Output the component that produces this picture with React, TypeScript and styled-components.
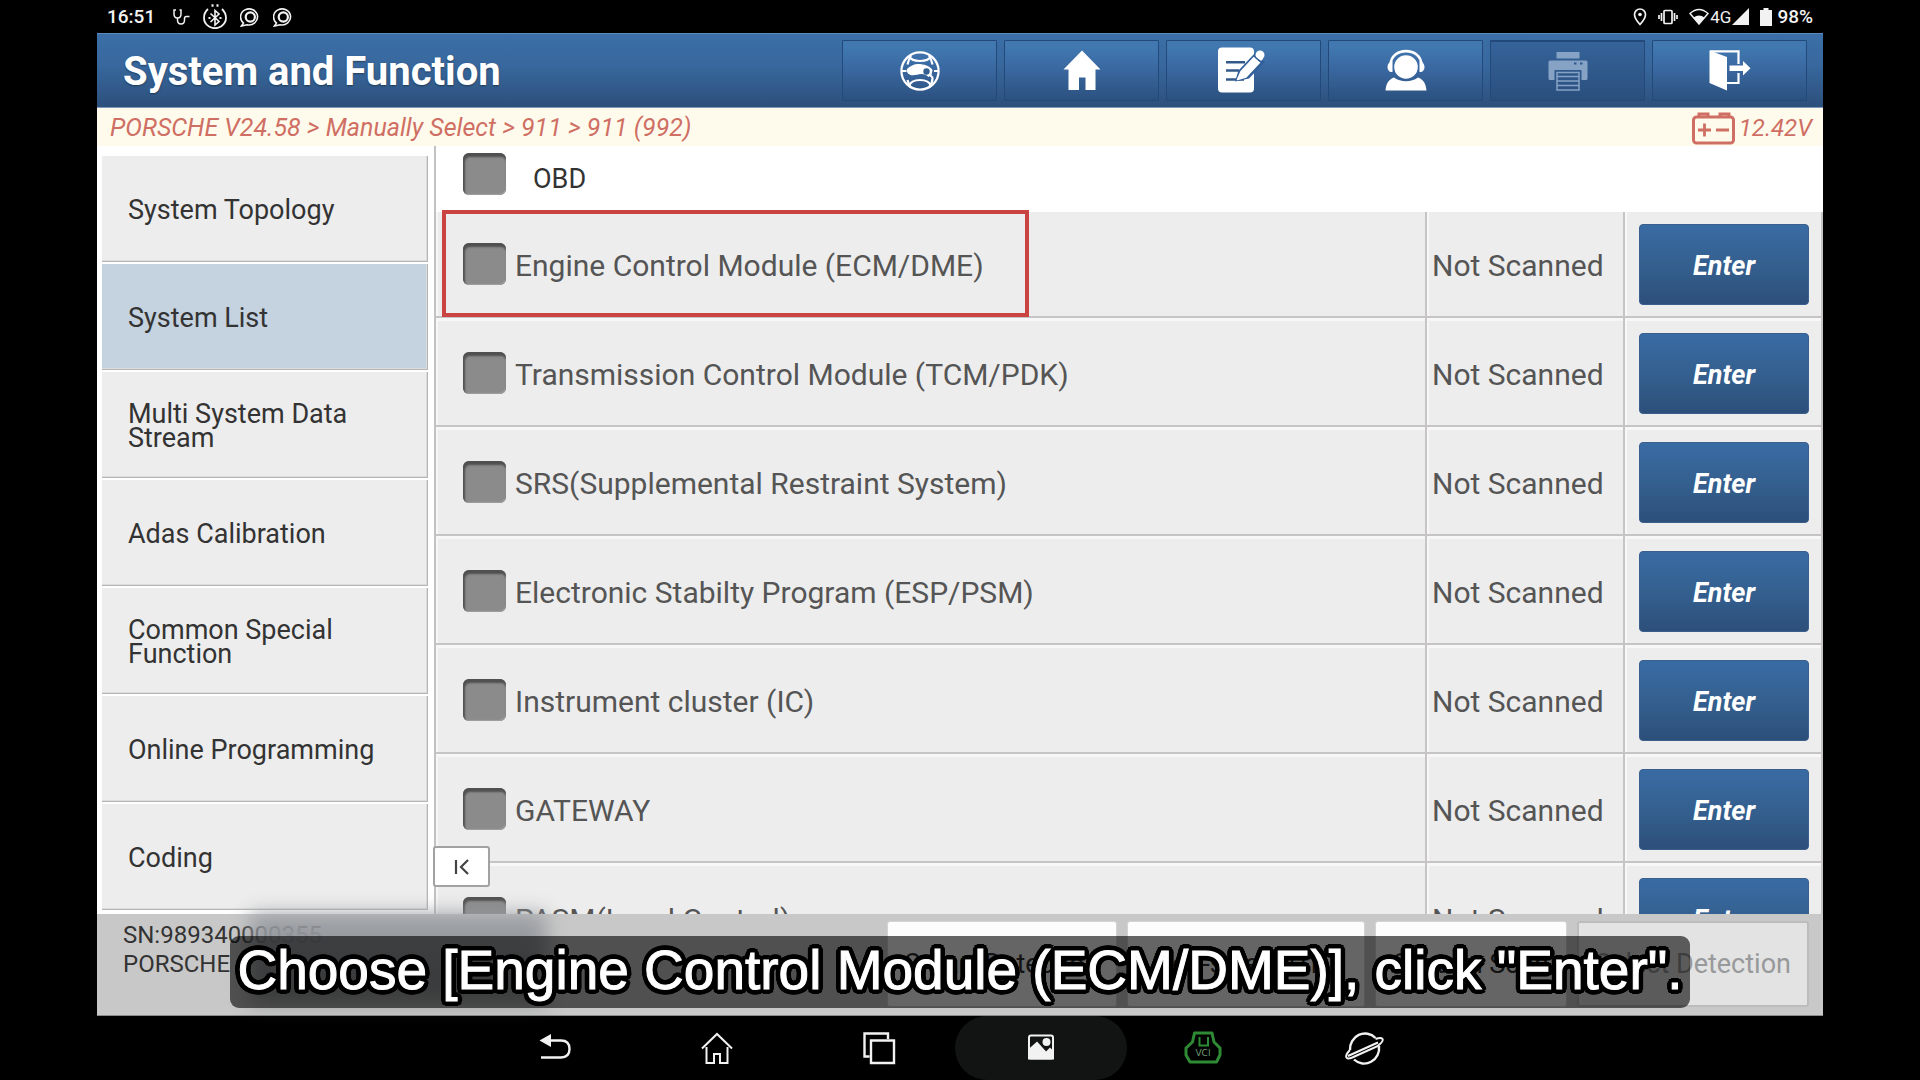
import React from "react";
import styled, { createGlobalStyle, css } from "styled-components";

const GlobalStyle = createGlobalStyle`
  *, *::before, *::after { box-sizing: border-box; }
  body { margin: 0; background: #000; font-family: Roboto, "Noto Sans", sans-serif; }
  button, input { font: inherit; margin: 0; }
  svg { display: block; flex: none; }
`;

const Screen = styled.div`
  position: relative;
  display: flex;
  flex-direction: column;
  height: 100vh;
  padding: 0 97px;
  background: #000;
  overflow: hidden;
`;

/* ---------- status bar ---------- */

const StatusBar = styled.div`
  display: flex;
  justify-content: space-between;
  flex: none;
  height: 33px;
  padding: 0 10px;
  color: #f2f2f2;
  font-size: 19px;
`;

const StatusGroup = styled.div<{ $gap: number }>`
  display: flex;
  align-items: center;
  gap: ${(p) => p.$gap}px;
`;

const StatusText = styled.span`
  font-weight: 500;
`;

const Clock = styled(StatusText)`
  padding-right: 5px;
`;

const Network = styled.span`
  font-size: 17px;
`;

/* ---------- header ---------- */

const Header = styled.header`
  display: flex;
  align-items: center;
  justify-content: space-between;
  flex: none;
  height: 75px;
  padding: 0 16px 0 26px;
  border-top: 1px solid #5b8bbd;
  border-bottom: 1px solid #7d9abb;
  background: linear-gradient(#3c6fa8, #37679c 45%, #2d4f7b);
`;

const Title = styled.h1`
  margin: 0;
  padding-top: 2px;
  color: #fff;
  font-size: 40px;
  font-weight: 700;
  line-height: 48px;
  text-shadow: 0 1px 2px rgba(0, 0, 0, 0.4);
`;

const Toolbar = styled.nav`
  display: flex;
  gap: 7px;
`;

const ToolButton = styled.button`
  display: flex;
  align-items: center;
  justify-content: center;
  width: 155px;
  height: 61px;
  padding: 0;
  border: 1px solid #22497a;
  border-radius: 1px;
  background: linear-gradient(#4178b0 10%, #3b6aa3 42%, #2b517f);
  color: #fff;

  &:disabled {
    border-width: 2px 1px 1px;
    background: linear-gradient(#35639a, #2a4f7d);
    color: #86a3c6;
  }
`;

/* ---------- breadcrumb ---------- */

const Crumbs = styled.div`
  display: flex;
  align-items: center;
  justify-content: space-between;
  flex: none;
  height: 38px;
  padding: 2px 11px 0 13px;
  background: #fffbec;
  color: #cf6f64;
  font-size: 25px;
  font-style: italic;
  line-height: 30px;
`;

const Voltage = styled.span`
  display: flex;
  align-items: center;
  gap: 4px;
  font-size: 24px;
`;

/* ---------- main area ---------- */

const Main = styled.main`
  position: relative;
  display: flex;
  flex: 1;
  min-height: 0;
  background: #fff;
  overflow: hidden;
`;

const Sidebar = styled.nav`
  flex: none;
  width: 337px;
  padding: 8px 6px 0 5px;
`;

const SideItem = styled.button<{ $active?: boolean }>`
  display: flex;
  align-items: center;
  width: 100%;
  height: 108px;
  padding: 2px 50px 0 26px;
  border: 0;
  border-top: 2px solid #fff;
  box-shadow: inset -1px -1px 0 #b5b5b5, inset -2px -2px 0 #dcdcdc;
  background: ${(p) => (p.$active ? "#c5d2df" : "#ededed")};
  color: #333;
  font-size: 27px;
  line-height: 24px;
  text-align: left;
`;

const Panel = styled.section`
  flex: 1;
  min-width: 0;
  border-left: 2px solid #c2c2c2;
  overflow: hidden;
`;

const Group = styled.label`
  display: flex;
  align-items: flex-start;
  gap: 27px;
  height: 63px;
  padding: 7px 0 0 27px;
  color: #333;
  font-size: 27px;
  line-height: 52px;
`;

const Check = styled.input.attrs({ type: "checkbox" })`
  appearance: none;
  flex: none;
  width: 43px;
  height: 42px;
  border-radius: 6px;
  background: #8b8b8b;
  box-shadow: inset 1px 3px 2px 1px #505050, inset -1px -1px 1px #a0a0a0;
`;

const SystemTable = styled.table`
  width: 100%;
  border-collapse: collapse;
  table-layout: fixed;
`;

const cell = css`
  height: 109px;
  background: #ededed;
  box-shadow: inset -2px -2px 0 #c6c4c4, inset 2px 3px 0 #f7f7f7;
  color: #555;
  font-size: 30px;

  tr:first-child > & {
    box-shadow: inset 0 3px 0 #fff, inset -2px -2px 0 #c6c4c4, inset 2px 0 0 #f7f7f7;
  }
`;

const NameCell = styled.td`
  ${cell}
  position: relative;
  padding: 1px 0 0 27px;
`;

const NameLabel = styled.label`
  display: flex;
  align-items: center;
  gap: 9px;
`;

const NameText = styled.span`
  padding-top: 3px;
`;

const StatusCell = styled.td`
  ${cell}
  width: 198px;
  padding: 4px 0 0 5px;
`;

const ActionCell = styled.td`
  ${cell}
  width: 198px;
  padding: 2px 14px 0;
`;

const EnterButton = styled.button`
  display: block;
  width: 100%;
  height: 81px;
  padding: 2px 0 0;
  border: 1px solid #3a5f8c;
  border-radius: 4px;
  background: linear-gradient(#396ba4, #34608f 50%, #2d4f7a);
  color: #fff;
  font-size: 27px;
  font-style: italic;
  font-weight: 700;
`;

const Marker = styled.div`
  position: absolute;
  top: 1px;
  left: 6px;
  width: 587px;
  height: 107px;
  border: 4px solid #ca4442;
  pointer-events: none;
`;

const Collapse = styled.button`
  position: absolute;
  bottom: 27px;
  left: 336px;
  display: flex;
  align-items: center;
  justify-content: center;
  width: 57px;
  height: 41px;
  padding: 0;
  border: 2px solid #a2a2a2;
  border-radius: 3px;
  background: #fff;
  color: #444;
`;

/* ---------- footer ---------- */

const Footer = styled.footer`
  display: flex;
  justify-content: space-between;
  flex: none;
  height: 102px;
  padding: 7px 14px 8px 26px;
  border-bottom: 1px solid #8a8a8a;
  background: #c8c8c8;
`;

const Device = styled.div`
  color: #333;
  font-size: 24px;
  line-height: 29px;
`;

const Actions = styled.div`
  display: flex;
  gap: 10px;
`;

const FootButton = styled.button<{ $width: number }>`
  width: ${(p) => p.$width}px;
  padding: 0;
  border: 1px solid #d4d4d4;
  border-radius: 3px;
  background: #fdfdfd;
  color: #333;
  font-size: 27px;

  &:disabled {
    border: 2px solid #bcbcbc;
    background: #e3e3e3;
    color: #98999b;
  }
`;

/* ---------- navigation bar ---------- */

const NavBar = styled.nav`
  display: flex;
  justify-content: center;
  flex: none;
  height: 64px;
`;

const NavButton = styled.button<{ $active?: boolean }>`
  display: flex;
  align-items: center;
  justify-content: center;
  width: ${(p) => (p.$active ? 172 : 162)}px;
  margin: 0 ${(p) => (p.$active ? -5 : 0)}px;
  padding: 0;
  border: 0;
  border-radius: 32px;
  background: ${(p) => (p.$active ? "#121414" : "transparent")};
  color: #f2f2f2;
`;

/* ---------- subtitle over the screen ---------- */

const Haze = styled.div`
  position: absolute;
  bottom: 76px;
  left: 250px;
  width: 296px;
  height: 90px;
  background: linear-gradient(rgba(150, 154, 159, 0.95) 35%, rgba(110, 115, 120, 0.6) 60%, rgba(70, 74, 78, 0.4));
  filter: blur(10px);
  pointer-events: none;
`;

const CaptionLayer = styled.div`
  position: absolute;
  right: 0;
  bottom: 72px;
  left: 0;
  display: flex;
  justify-content: center;
  pointer-events: none;
`;

const outline = Array.from({ length: 24 }, (_, i) => {
  const angle = (i * Math.PI) / 12;
  return `${(Math.cos(angle) * 5).toFixed(2)}px ${(Math.sin(angle) * 5).toFixed(2)}px 0 #000`;
}).join(", ");

const Caption = styled.p`
  margin: 0;
  padding: 0 7px 4px;
  border-radius: 9px;
  background: rgba(0, 0, 0, 0.6);
  color: #fff;
  font-family: "Liberation Sans", Arial, sans-serif;
  font-size: 55px;
  line-height: 68px;
  white-space: nowrap;
  -webkit-text-stroke: 1px #fff;
  text-shadow: ${outline};
`;

/* ---------- icons ---------- */

const Tool = ({ children }: { children: React.ReactNode }) => (
  <svg width="56" height="56" viewBox="0 0 56 56" fill="none" stroke="none" aria-hidden="true">
    {children}
  </svg>
);

const GlobeIcon = () => (
  <Tool>
    <g stroke="currentColor" strokeWidth="2.2">
      <circle cx="28" cy="28" r="18.6" />
      <path d="M17 13q2 5 11 5t11-5M17 43q2-6 11-6t11 6" />
      <path d="M15.500 21.500q1-5 3.500-9M40.500 21.500q-1-5-3.500-9M15.500 37q1 4 3 7M40.500 35q0 5-3 8.500" />
      <path d="M9.500 28h5M42 28h4.500" />
    </g>
    <path fill="currentColor" d="M15 26c3-3 7-5 11-5 6 0 12 2 14.500 6l-1 5-3 2c-2-2-4-3-7-3-4 0-7 2-11 1-3-1-4-3-3.500-6z" />
    <circle cx="34.500" cy="28.500" r="3.200" fill="#33608f" />
    <path d="M37 31l4 4" stroke="currentColor" strokeWidth="2" />
  </Tool>
);

const HomeIcon = () => (
  <Tool>
    <path fill="currentColor" d="M28 7.500 46.500 26.500H41.500V47H31.500V34.500H25V47H14.500V26.500H9.500Z" />
  </Tool>
);

const NoteIcon = () => (
  <Tool>
    <rect x="2" y="4.500" width="36" height="45" rx="4" fill="currentColor" />
    <path d="M10 19.300H29M10 27.500H23M10 36.500H28" stroke="#33598a" strokeWidth="2.400" />
    <path d="M19 38.500 22.500 27.500 39 10 49 19 33 35.500Z" fill="#33609a" />
    <path d="M21.500 36.500 25 28.500 38 14.500 43.500 19.500 30 34Z" fill="currentColor" stroke="currentColor" strokeWidth="1.500" strokeLinejoin="round" />
    <path d="M40.500 12 46 17" stroke="currentColor" strokeWidth="3" />
    <circle cx="44" cy="12" r="4.500" fill="currentColor" />
    <path d="M38 13 44 18.500" stroke="#33609a" strokeWidth="1.500" />
  </Tool>
);

const SupportIcon = () => (
  <Tool>
    <path d="M12.500 22C13 3.500 43 3.500 43.500 22" stroke="currentColor" strokeWidth="2.600" />
    <path fill="currentColor" d="M14.500 18v11c-3 .5-5-2-5-5s2-5.500 5-6zM41.500 18v11c3 .5 5-2 5-5s-2-5.500-5-6z" />
    <circle cx="28" cy="24" r="11.800" fill="currentColor" />
    <path fill="currentColor" d="M7.500 47.500c.5-6.500 3-11 8.500-13 7 5 17 5 24 0 5.500 2 8 6.500 8.500 13z" />
  </Tool>
);

const PrinterIcon = () => (
  <Tool>
    <rect x="16.500" y="9" width="23" height="6.500" fill="currentColor" />
    <path fill="currentColor" d="M10 17.500H46q1.500 0 1.500 1.500V35.500q0 1.500-1.500 1.500H41.500V27H14.500V37H10q-1.500 0-1.500-1.500V19q0-1.500 1.500-1.500z" />
    <path d="M34 20.500h2.500M40 20.500h2.500" stroke="#2f5a8c" strokeWidth="2" />
    <path d="M17 29.500H39V47H17ZM17 33.500H39M17 38H39M17 42.500H39" stroke="currentColor" strokeWidth="1.500" />
  </Tool>
);

const ExitIcon = () => (
  <Tool>
    <path fill="currentColor" d="M7.500 7.500 25 14V47.500L7.500 40Z" />
    <path d="M8 8.300H36.500V21M36.500 30V40H25" stroke="currentColor" strokeWidth="2.200" />
    <path fill="currentColor" d="M27.500 22.500H41V18L48.500 25.200 41 32.500V28H27.500Z" />
  </Tool>
);

const BatteryIcon = () => (
  <svg width="43" height="33" viewBox="0 0 43 33" fill="none" stroke="currentColor" aria-hidden="true">
    <rect x="1.500" y="5" width="40" height="26" rx="3" strokeWidth="3" />
    <path d="M7 5V2H16V5M28 5V2H37V5" strokeWidth="3" />
    <path d="M6 18H19M12.500 11.500V24.500M24 18H37" strokeWidth="2.800" />
  </svg>
);

const StethoscopeIcon = () => (
  <svg width="17" height="16" viewBox="0 0 17 16" fill="none" stroke="currentColor" strokeWidth="1.500" aria-hidden="true">
    <path d="M3 1H1V5Q1 9 4.500 9T8 5V1H6.500M4.500 9v2q0 4 3.500 4t3.500-4V9.500q0-2 2-2h3" />
  </svg>
);

const BluetoothIcon = () => (
  <svg width="24" height="25" viewBox="0 0 24 25" fill="none" stroke="currentColor" aria-hidden="true">
    <path d="M5 5Q1 8.500 1 14T6 22.500Q12 26 18 22.500 23 19 23 14T19 5" strokeWidth="1.800" />
    <path d="M8.500 1.500h2M13.500 1.500h2" strokeWidth="2.500" />
    <path d="M7.500 9.500 16 17.500 12 21V6.500L16 10 7.500 18" strokeWidth="1.600" />
    <path d="M5.500 14h2M16.500 14h2" strokeWidth="2" />
  </svg>
);

const ChatIcon = () => (
  <svg width="20" height="20" viewBox="0 0 20 20" fill="none" stroke="currentColor" aria-hidden="true">
    <path d="M3.500 16A8.500 8 0 1 1 7 17.700L1.500 19Z" strokeWidth="1.600" />
    <circle cx="10.300" cy="10" r="4.600" strokeWidth="2.200" />
  </svg>
);

const PinIcon = () => (
  <svg width="14" height="18" viewBox="0 0 14 18" fill="none" stroke="currentColor" aria-hidden="true">
    <path d="M7 16.500Q1.500 10.500 1.500 6.500A5.500 5.500 0 0 1 12.500 6.500Q12.500 10.500 7 16.500Z" strokeWidth="1.700" />
    <circle cx="7" cy="6.500" r="1.800" fill="currentColor" stroke="none" />
  </svg>
);

const VibrateIcon = () => (
  <svg width="20" height="16" viewBox="0 0 20 16" fill="none" stroke="currentColor" strokeWidth="1.700" aria-hidden="true">
    <rect x="6" y="1.500" width="8" height="13" rx="1" />
    <path d="M3.500 4V12M1 6V10M16.500 4V12M19 6V10" />
  </svg>
);

const SignalIcons = () => (
  <StatusGroup $gap={1}>
    <svg width="20" height="17" viewBox="0 0 20 17" fill="none" aria-hidden="true">
      <path d="M1 5.500Q10-2.500 19 5.500L10 16Z" stroke="currentColor" strokeWidth="1.500" />
      <path d="M4.500 9.500Q10 5.500 15.500 9.500L10 16Z" fill="currentColor" />
    </svg>
    <Network>4G</Network>
    <svg width="17" height="17" viewBox="0 0 17 17" aria-hidden="true">
      <path d="M17 0V17H0Z" fill="currentColor" />
    </svg>
  </StatusGroup>
);

const ChargeIcon = () => (
  <svg width="12" height="18" viewBox="0 0 12 18" aria-hidden="true">
    <path d="M3.500 0H8.500V2H12V18H0V2H3.500Z" fill="currentColor" />
  </svg>
);

const NavIcon = ({ children }: { children: React.ReactNode }) => (
  <svg width="40" height="36" viewBox="0 0 40 36" fill="none" stroke="currentColor" strokeWidth="2" aria-hidden="true">
    {children}
  </svg>
);

const navItems = [
  {
    label: "Back",
    icon: <><path d="M8 10.500H26Q34.500 10.500 34.500 19T26 27.500H6" strokeWidth="2.400" /><path d="M4.500 10.500 16 4V17Z" fill="currentColor" stroke="none" /></>,
  },
  { label: "Home", icon: <path d="M5 18.500 20 4 35 18.500M9.500 17V33H17V24H23V33H30.500V17" /> },
  { label: "Recent apps", icon: <path d="M10.500 26.500H5.500V3.500H29V9M12 10.500H35V33H12Z" strokeWidth="2.400" /> },
  {
    label: "Gallery",
    active: true,
    icon: <><rect x="8" y="5.500" width="24" height="23" rx="2" /><path d="M8 20 16 13 25 23 29 19 32 22V28.500H8Z" fill="currentColor" /><circle cx="25.500" cy="12" r="3" fill="currentColor" /></>,
  },
  {
    label: "VCI",
    icon: (
      <g stroke="#2f8a35">
        <path d="M11.500 3H29L31 12 37 18V25L33.500 32H7L3 25V18L9.500 12Z" strokeWidth="3" strokeLinejoin="round" />
        <path d="M16.500 7V15.500H25V7" strokeWidth="2" />
        <text x="20" y="26" fill="#6f9a73" stroke="none" fontSize="9" fontFamily="DejaVu Sans" textAnchor="middle">VCI</text>
      </g>
    ),
  },
  {
    label: "Browser",
    icon: <><path d="M5 20A15 15.500 0 0 1 30.500 8M34 16A15 15.500 0 0 1 9 29.500" strokeWidth="2.400" /><path d="M5 20Q0 25 1.500 27.500T9.500 26.500L32 16.500Q39 11 37.500 9T30.500 9M3 26 33 12.500" /></>,
  },
];

const tools = [
  { label: "Network", icon: <GlobeIcon /> },
  { label: "Home", icon: <HomeIcon /> },
  { label: "Feedback", icon: <NoteIcon /> },
  { label: "Support", icon: <SupportIcon /> },
  { label: "Print", icon: <PrinterIcon />, disabled: true },
  { label: "Exit", icon: <ExitIcon /> },
];

const sideItems = [
  "System Topology",
  "System List",
  "Multi System Data Stream",
  "Adas Calibration",
  "Common Special Function",
  "Online Programming",
  "Coding",
];

const systems = [
  "Engine Control Module (ECM/DME)",
  "Transmission Control Module (TCM/PDK)",
  "SRS(Supplemental Restraint System)",
  "Electronic Stabilty Program (ESP/PSM)",
  "Instrument cluster (IC)",
  "GATEWAY",
  "PASM(Level Control)",
];

const footerActions = [
  { label: "Smart Detection", width: 230 },
  { label: "Non-select DTC", width: 238 },
  { label: "System Scan", width: 192 },
  { label: "Select Detection", width: 232, disabled: true },
];

export default function App() {
  return (
    <>
      <GlobalStyle />
      <Screen>
        <StatusBar>
          <StatusGroup $gap={13}>
            <Clock>16:51</Clock>
            <StethoscopeIcon />
            <BluetoothIcon />
            <ChatIcon />
            <ChatIcon />
          </StatusGroup>
          <StatusGroup $gap={11}>
            <PinIcon />
            <VibrateIcon />
            <SignalIcons />
            <StatusGroup $gap={5}>
              <ChargeIcon />
              <StatusText>98%</StatusText>
            </StatusGroup>
          </StatusGroup>
        </StatusBar>

        <Header>
          <Title>System and Function</Title>
          <Toolbar>
            {tools.map((t) => (
              <ToolButton key={t.label} aria-label={t.label} disabled={t.disabled}>
                {t.icon}
              </ToolButton>
            ))}
          </Toolbar>
        </Header>

        <Crumbs>
          <span>PORSCHE V24.58 &gt; Manually Select &gt; 911 &gt; 911 (992)</span>
          <Voltage>
            <BatteryIcon />
            12.42V
          </Voltage>
        </Crumbs>

        <Main>
          <Sidebar>
            {sideItems.map((name) => (
              <SideItem key={name} $active={name === "System List"}>
                {name}
              </SideItem>
            ))}
          </Sidebar>
          <Panel>
            <Group>
              <Check />
              OBD
            </Group>
            <SystemTable>
              <tbody>
                {systems.map((name, i) => (
                  <tr key={name}>
                    <NameCell>
                      <NameLabel>
                        <Check />
                        <NameText>{name}</NameText>
                      </NameLabel>
                      {i === 0 && <Marker />}
                    </NameCell>
                    <StatusCell>Not Scanned</StatusCell>
                    <ActionCell>
                      <EnterButton>Enter</EnterButton>
                    </ActionCell>
                  </tr>
                ))}
              </tbody>
            </SystemTable>
          </Panel>
          <Collapse aria-label="Collapse sidebar">
            <svg width="18" height="18" viewBox="0 0 18 18" fill="none" stroke="currentColor" strokeWidth="2.200" aria-hidden="true">
              <path d="M3 2V16M15 2 8 9 15 16" />
            </svg>
          </Collapse>
        </Main>

        <Footer>
          <Device>
            SN:989340000355
            <br />
            PORSCHE
          </Device>
          <Actions>
            {footerActions.map((a) => (
              <FootButton key={a.label} $width={a.width} disabled={a.disabled}>
                {a.label}
              </FootButton>
            ))}
          </Actions>
        </Footer>

        <NavBar>
          {navItems.map((n) => (
            <NavButton key={n.label} aria-label={n.label} $active={n.active}>
              <NavIcon>{n.icon}</NavIcon>
            </NavButton>
          ))}
        </NavBar>

        <Haze />
        <CaptionLayer>
          <Caption>Choose [Engine Control Module (ECM/DME)], click "Enter".</Caption>
        </CaptionLayer>
      </Screen>
    </>
  );
}
